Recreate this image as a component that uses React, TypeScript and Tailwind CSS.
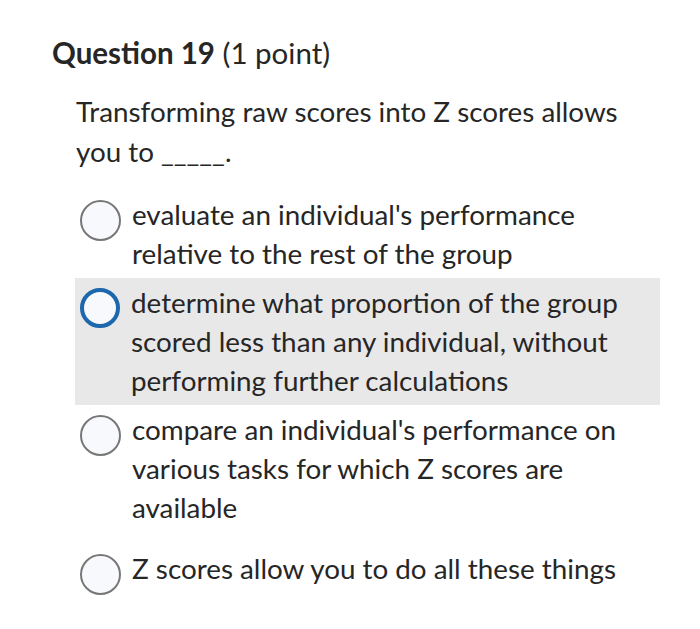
import React from "react";

const options = [
  { text: "evaluate an individual's performance relative to the rest of the group", selected: false },
  { text: "determine what proportion of the group scored less than any individual, without performing further calculations", selected: true },
  { text: "compare an individual's performance on various tasks for which Z scores are available", selected: false },
  { text: "Z scores allow you to do all these things", selected: false },
];

function Radio({ selected }: { selected: boolean }) {
  return (
    <div
      className={
        selected
          ? "w-[40px] h-[40px] shrink-0 rounded-full border-[4px] border-[#1d67ad] bg-[#f8f9fc]"
          : "w-[41px] h-[41px] shrink-0 rounded-full border-[2px] border-[#777777] bg-[#f8f9fc]"
      }
    />
  );
}

export default function App() {
  return (
    <div className="w-[700px] h-[629px] bg-white text-[#262626]" style={{ fontFamily: "Lato, 'Open Sans', sans-serif" }}>
      <div className="pt-[34px] pl-[52px]">
        <h1 className="text-[29.5px] leading-[38px]">
          <span className="font-bold">Question 19</span> <span>(1 point)</span>
        </h1>
      </div>
      <div className="pl-[76px] w-[640px] mt-[20px] text-[27.8px] leading-[40px]">
        Transforming raw scores into Z scores allows you to _____.
      </div>
      <div className="mt-[18px] ml-[75px] w-[585px] flex flex-col">
        {options.map((o, i) => (
          <div
            key={i}
            className={
              (o.selected ? "bg-[#e8e8e8] " : "") +
              (i === 3 ? "mt-[12px] " : "") +
              "flex items-start gap-[11px] pl-[5px] pr-[12px] py-[5px]"
            }
          >
            <div className="pt-[5px]">
              <Radio selected={o.selected} />
            </div>
            <div className="text-[27.8px] leading-[39px]">{o.text}</div>
          </div>
        ))}
      </div>
    </div>
  );
}
